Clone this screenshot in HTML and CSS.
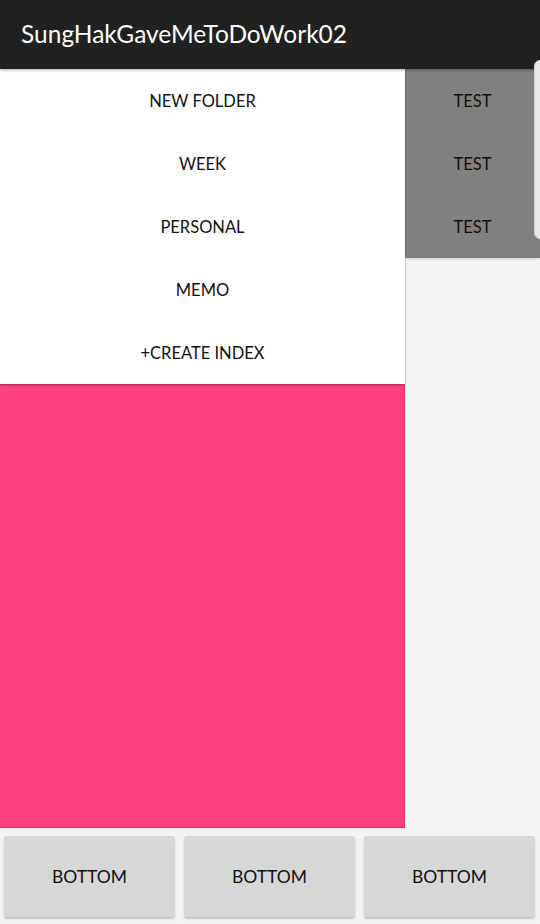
FILE: index.html
```html
<!DOCTYPE html>
<html>
<head>
<meta charset="utf-8">
<link rel="stylesheet" href="styles.css">
</head>
<body>
<div class="app">
  <header class="appbar">SungHakGaveMeToDoWork02</header>
  <div class="edge"></div>
  <main class="content">
    <div class="left">
      <ul class="menu">
        <li>NEW FOLDER</li>
        <li>WEEK</li>
        <li>PERSONAL</li>
        <li>MEMO</li>
        <li>+CREATE INDEX</li>
      </ul>
      <div class="pink"></div>
    </div>
    <div class="right">
      <ul class="tests">
        <li>TEST</li>
        <li>TEST</li>
        <li>TEST</li>
      </ul>
    </div>
  </main>
  <footer class="bottom">
    <button class="btn">BOTTOM</button>
    <button class="btn">BOTTOM</button>
    <button class="btn">BOTTOM</button>
  </footer>
</div>
</body>
</html>
```
FILE: styles.css
```css
* { box-sizing: border-box; }
html, body { margin: 0; padding: 0; }
body {
  width: 540px;
  height: 924px;
  overflow: hidden;
  background: #f3f3f3;
  font-family: "Lato", "Open Sans", sans-serif;
  color: #111;
}
.app {
  position: relative;
  display: flex;
  flex-direction: column;
  height: 924px;
}
.appbar {
  height: 69px;
  background: #212121;
  color: #fff;
  font-size: 24.5px;
  padding-left: 21px;
  display: flex;
  align-items: center;
  padding-bottom: 2px;
  box-shadow: 0 1px 3px rgba(0,0,0,0.35);
  position: relative;
  z-index: 2;
}
.edge {
  position: absolute;
  left: 534px;
  top: 60px;
  width: 12px;
  height: 179px;
  border-radius: 6px;
  background: #e8e8e8;
  border: 1px solid #cfcfcf;
  z-index: 3;
}
.content {
  display: flex;
  height: 759px;
}
.left {
  width: 405px;
  display: flex;
  flex-direction: column;
}
.menu, .tests {
  list-style: none;
  margin: 0;
  padding: 0;
}
.menu { background: #fff; position: relative; z-index: 1; box-shadow: 0 1px 2px rgba(0,0,0,0.4); }
.menu li, .tests li {
  height: 63px;
  display: flex;
  align-items: center;
  justify-content: center;
  font-size: 16.5px;
  padding-top: 1px;
}
.pink {
  flex: 1;
  background: #ff4081;
  border-right: 1px solid #c8356a;
  border-bottom: 1px solid #c8356a;
}
.right {
  width: 135px;
}
.tests {
  background: #808080;
  box-shadow: 0 1px 2px rgba(0,0,0,0.15);
}
.bottom {
  display: flex;
  gap: 9px;
  padding: 8px 5px 0 4px;
}
.btn {
  flex: 1;
  height: 81px;
  background: #d6d7d7;
  border: none;
  border-radius: 3px;
  box-shadow: 0 2px 2px rgba(0,0,0,0.2);
  font-family: inherit;
  font-size: 17.5px;
  color: #111;
  padding: 0;
}
```
